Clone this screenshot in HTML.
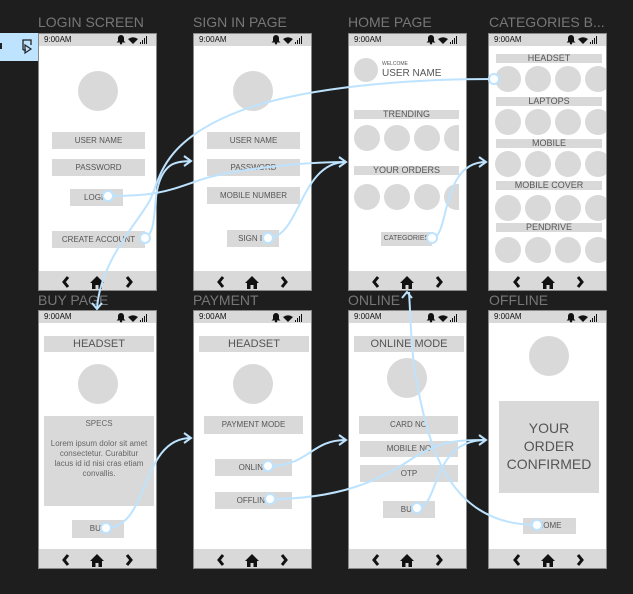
<!DOCTYPE html>
<html><head><style>
body{margin:0;width:633px;height:594px;background:#1e1e1e;position:relative;overflow:hidden;font-family:"Liberation Sans",sans-serif}
.t{position:absolute;color:#777;font-size:14px;line-height:14px;white-space:nowrap}
.f{position:absolute;width:119px;height:257px;background:#fff;border:1px solid #888;box-sizing:border-box;overflow:hidden}
.sb{position:absolute;left:0;top:0;right:0;height:12px;background:#d9d9d9;font-size:8px;line-height:12px;padding-left:5px;color:#111}
.nav{position:absolute;left:0;bottom:0;right:0;height:19px;background:#d9d9d9}
.b{position:absolute;background:#d9d9d9;color:#555;font-size:8px;text-align:center;white-space:nowrap;overflow:hidden}
.c{position:absolute;border-radius:50%;background:#d9d9d9}
</style></head><body>
<div style="position:absolute;left:0;top:33px;width:38px;height:28px;background:#bde3ff"></div>
<svg style="position:absolute;left:0;top:33px" width="38" height="28"><rect x="0" y="10" width="2" height="6" fill="#222"/><path d="M23 17V7h8v5M23 17h3" stroke="#222" stroke-width="1.3" fill="none"/><path d="M25 12l6 4-6 4z" stroke="#222" stroke-width="1.2" fill="none"/></svg>

<div class="t" style="left:38px;top:15px">LOGIN SCREEN</div>
<div class="t" style="left:193px;top:15px">SIGN IN PAGE</div>
<div class="t" style="left:348px;top:15px">HOME PAGE</div>
<div class="t" style="left:489px;top:15px">CATEGORIES B...</div>
<div class="t" style="left:38px;top:293px">BUY PAGE</div>
<div class="t" style="left:193px;top:293px">PAYMENT</div>
<div class="t" style="left:348px;top:293px">ONLINE</div>
<div class="t" style="left:489px;top:293px">OFFLINE</div>

<div class="f" style="left:38px;top:33px;height:258px"><div class="sb">9:00AM</div><div class="nav"></div>
<div class="c" style="left:39px;top:37px;width:40px;height:40px"></div>
<div class="b" style="left:13px;top:98px;width:93px;height:17px;line-height:17px">USER NAME</div>
<div class="b" style="left:13px;top:125px;width:93px;height:17px;line-height:17px">PASSWORD</div>
<div class="b" style="left:31px;top:155px;width:53px;height:17px;line-height:17px">LOGIN</div>
<div class="b" style="left:13px;top:197px;width:93px;height:17px;line-height:17px">CREATE ACCOUNT</div>
</div>
<div class="f" style="left:193px;top:33px;height:258px"><div class="sb">9:00AM</div><div class="nav"></div>
<div class="c" style="left:39px;top:37px;width:40px;height:40px"></div>
<div class="b" style="left:13px;top:98px;width:93px;height:17px;line-height:17px">USER NAME</div>
<div class="b" style="left:13px;top:125px;width:93px;height:17px;line-height:17px">PASSWORD</div>
<div class="b" style="left:13px;top:153px;width:93px;height:17px;line-height:17px">MOBILE NUMBER</div>
<div class="b" style="left:33px;top:196px;width:52px;height:17px;line-height:17px">SIGN IN</div>
</div>
<div class="f" style="left:348px;top:33px;height:258px"><div class="sb">9:00AM</div><div class="nav"></div>
<div class="c" style="left:5px;top:24px;width:24px;height:24px"></div>
<div style="position:absolute;left:33px;top:27px;font-size:5px;color:#555">WELCOME</div>
<div style="position:absolute;left:33px;top:34px;font-size:10px;color:#555">USER NAME</div>
<div class="b" style="left:5px;top:76px;width:105px;height:9px;line-height:9px;font-size:9px">TRENDING</div>
<div class="c" style="left:5px;top:91px;width:26px;height:26px"></div><div class="c" style="left:35px;top:91px;width:26px;height:26px"></div><div class="c" style="left:65px;top:91px;width:26px;height:26px"></div><div class="c" style="left:95px;top:91px;width:26px;height:26px;clip-path:inset(0 11px 0 0)"></div>
<div class="b" style="left:5px;top:132px;width:105px;height:9px;line-height:9px;font-size:9px">YOUR ORDERS</div>
<div class="c" style="left:5px;top:150px;width:26px;height:26px"></div><div class="c" style="left:35px;top:150px;width:26px;height:26px"></div><div class="c" style="left:65px;top:150px;width:26px;height:26px"></div><div class="c" style="left:95px;top:150px;width:26px;height:26px;clip-path:inset(0 11px 0 0)"></div>
<div class="b" style="left:32px;top:198px;width:51px;height:14px;line-height:14px;font-size:7px">CATEGORIES</div>
</div>
<div class="f" style="left:488px;top:33px;height:258px"><div class="sb">9:00AM</div><div class="nav"></div>
<div class="b" style="left:7px;top:20px;width:106px;height:9px;line-height:9px;font-size:9px">HEADSET</div>
<div class="c" style="left:6px;top:32px;width:26px;height:26px"></div><div class="c" style="left:36px;top:32px;width:26px;height:26px"></div><div class="c" style="left:66px;top:32px;width:26px;height:26px"></div><div class="c" style="left:96px;top:32px;width:26px;height:26px"></div>
<div class="b" style="left:7px;top:63px;width:106px;height:9px;line-height:9px;font-size:9px">LAPTOPS</div>
<div class="c" style="left:6px;top:75px;width:26px;height:26px"></div><div class="c" style="left:36px;top:75px;width:26px;height:26px"></div><div class="c" style="left:66px;top:75px;width:26px;height:26px"></div><div class="c" style="left:96px;top:75px;width:26px;height:26px"></div>
<div class="b" style="left:7px;top:105px;width:106px;height:9px;line-height:9px;font-size:9px">MOBILE</div>
<div class="c" style="left:6px;top:117px;width:26px;height:26px"></div><div class="c" style="left:36px;top:117px;width:26px;height:26px"></div><div class="c" style="left:66px;top:117px;width:26px;height:26px"></div><div class="c" style="left:96px;top:117px;width:26px;height:26px"></div>
<div class="b" style="left:7px;top:147px;width:106px;height:9px;line-height:9px;font-size:9px">MOBILE COVER</div>
<div class="c" style="left:6px;top:161px;width:26px;height:26px"></div><div class="c" style="left:36px;top:161px;width:26px;height:26px"></div><div class="c" style="left:66px;top:161px;width:26px;height:26px"></div><div class="c" style="left:96px;top:161px;width:26px;height:26px"></div>
<div class="b" style="left:7px;top:189px;width:106px;height:9px;line-height:9px;font-size:9px">PENDRIVE</div>
<div class="c" style="left:6px;top:203px;width:26px;height:26px"></div><div class="c" style="left:36px;top:203px;width:26px;height:26px"></div><div class="c" style="left:66px;top:203px;width:26px;height:26px"></div><div class="c" style="left:96px;top:203px;width:26px;height:26px"></div>
</div>

<div class="f" style="left:38px;top:310px;height:259px"><div class="sb">9:00AM</div><div class="nav"></div>
<div class="b" style="left:5px;top:25px;width:110px;height:16px;line-height:16px;font-size:11px">HEADSET</div>
<div class="c" style="left:39px;top:53px;width:40px;height:40px"></div>
<div class="b" style="left:5px;top:105px;width:110px;height:90px;font-size:8px;line-height:10px;padding:3px 6px 0;box-sizing:border-box;white-space:normal;color:#666">SPECS<br><br>Lorem ipsum dolor sit amet consectetur. Curabitur lacus id id nisi cras etiam convallis.</div>
<div class="b" style="left:33px;top:209px;width:52px;height:18px;line-height:18px">BUY</div>
</div>
<div class="f" style="left:193px;top:310px;height:259px"><div class="sb">9:00AM</div><div class="nav"></div>
<div class="b" style="left:5px;top:25px;width:110px;height:16px;line-height:16px;font-size:11px">HEADSET</div>
<div class="c" style="left:39px;top:53px;width:40px;height:40px"></div>
<div class="b" style="left:10px;top:105px;width:99px;height:18px;line-height:18px">PAYMENT MODE</div>
<div class="b" style="left:21px;top:148px;width:77px;height:17px;line-height:17px">ONLINE</div>
<div class="b" style="left:21px;top:181px;width:77px;height:17px;line-height:17px">OFFLINE</div>
</div>
<div class="f" style="left:348px;top:310px;height:259px"><div class="sb">9:00AM</div><div class="nav"></div>
<div class="b" style="left:5px;top:25px;width:110px;height:16px;line-height:16px;font-size:11px">ONLINE MODE</div>
<div class="c" style="left:38px;top:47px;width:40px;height:40px"></div>
<div class="b" style="left:10px;top:105px;width:99px;height:18px;line-height:18px">CARD NO</div>
<div class="b" style="left:11px;top:130px;width:98px;height:16px;line-height:16px">MOBILE NO</div>
<div class="b" style="left:11px;top:154px;width:98px;height:17px;line-height:17px">OTP</div>
<div class="b" style="left:34px;top:190px;width:52px;height:17px;line-height:17px">BUY</div>
</div>
<div class="f" style="left:488px;top:310px;height:259px"><div class="sb">9:00AM</div><div class="nav"></div>
<div class="c" style="left:40px;top:25px;width:40px;height:40px"></div>
<div class="b" style="left:10px;top:90px;width:100px;height:92px;font-size:14px;line-height:18px;padding-top:18px;box-sizing:border-box;white-space:normal">YOUR<br>ORDER<br>CONFIRMED</div>
<div class="b" style="left:34px;top:207px;width:53px;height:16px;line-height:16px">HOME</div>
</div>

<svg style="position:absolute;left:0;top:0" width="633" height="594">
<defs>
<g id="st"><path d="M0 -5a3 3 0 0 1 6 0v3l1.5 1.5h-9l1.5-1.5z" fill="#111" transform="translate(-2 0)"/><circle cx="1" cy="0.3" r="1.2" fill="#111"/><path d="M8 -4q5 -3.5 10 0l-5 5z" fill="#111"/><path d="M20 1h1v-2h-1zM22 1h1v-4h-1zM24 1h1v-6h-1zM26 1h1v-8h-1z" fill="#111"/></g>
<g id="nv"><path d="M-29 -5l-4 5 4 5" stroke="#111" stroke-width="3" fill="none"/><path d="M-7 1l7-7 7 7h-2v6h-3.5v-4h-3v4h-3.5v-6z" fill="#111"/><path d="M30 -5l4 5-4 5" stroke="#111" stroke-width="3" fill="none"/></g>
</defs>
<use href="#st" x="120" y="43"/><use href="#st" x="275" y="43"/><use href="#st" x="430" y="43"/><use href="#st" x="570" y="43"/>
<use href="#st" x="120" y="321"/><use href="#st" x="275" y="321"/><use href="#st" x="430" y="321"/><use href="#st" x="570" y="321"/>
<use href="#nv" x="97" y="282"/><use href="#nv" x="252" y="282"/><use href="#nv" x="407" y="282"/><use href="#nv" x="548" y="282"/>
<use href="#nv" x="97" y="560"/><use href="#nv" x="252" y="560"/><use href="#nv" x="407" y="560"/><use href="#nv" x="548" y="560"/>
<g stroke="#bde3ff" stroke-width="2" fill="none">
<path d="M108 196C160 196 170 190 200 180S300 162 346 162"/>
<path d="M145 238C158 232 152 200 160 180S180 162 191 161"/>
<path d="M494 79C420 79 300 85 230 115S160 180 150 200S100 260 97 309"/>
<path d="M268 238C300 238 300 162 346 162"/>
<path d="M432 238C450 238 440 162 486 162"/>
<path d="M106 528C150 528 140 438 191 438"/>
<path d="M268 466C310 466 310 440 346 440"/>
<path d="M270 499C340 499 380 480 410 460S460 440 486 440"/>
<path d="M417 508C440 508 430 440 486 440"/>
<path d="M537 525C470 525 440 480 425 420S412 340 409 292"/>
<path d="M184 156l7 5-7 5M339 157l7 5-7 5M479 157l7 5-7 5M184 433l7 5-7 5M339 435l7 5-7 5M479 435l7 5-7 5M92 303l5 6 5-6M402 298l5-6 5 6"/>
</g>
<g fill="#fff" stroke="#bde3ff" stroke-width="2">
<circle cx="108" cy="196" r="5"/><circle cx="145" cy="238" r="5"/><circle cx="494" cy="79" r="5"/><circle cx="268" cy="238" r="5"/><circle cx="432" cy="238" r="5"/><circle cx="106" cy="528" r="5"/><circle cx="268" cy="466" r="5"/><circle cx="270" cy="499" r="5"/><circle cx="417" cy="508" r="5"/><circle cx="537" cy="525" r="5"/>
</g>
</svg>
</body></html>
